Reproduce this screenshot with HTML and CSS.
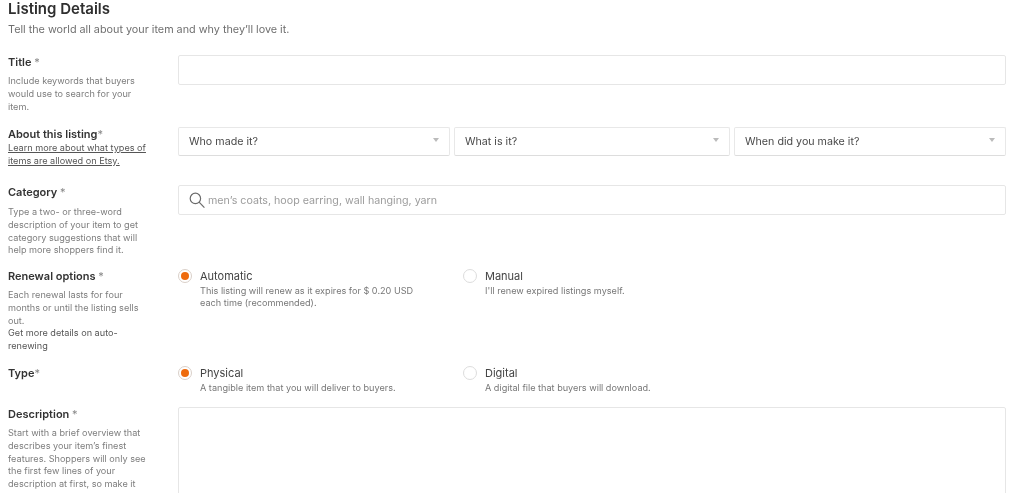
FILE: index.html
```html
<!DOCTYPE html>
<html lang="en">
<head>
<meta charset="utf-8">
<title>Listing Details</title>
<link rel="stylesheet" href="styles.css">
</head>
<body>
<main class="page">
  <header class="head">
    <h1>Listing Details</h1>
    <p>Tell the world all about your item and why they’ll love it.</p>
  </header>

  <section class="row row-title">
    <div class="label">
      <h2>Title <span class="star">*</span></h2>
      <p>Include keywords that buyers would use to search for your item.</p>
    </div>
    <div class="box box-30"></div>
  </section>

  <section class="row row-about">
    <div class="label">
      <h2>About this listing<span class="star">*</span></h2>
      <a href="#">Learn more about what types of items are allowed on Etsy.</a>
    </div>
    <div class="selects">
      <div class="select">Who made it?<i class="caret"></i></div>
      <div class="select">What is it?<i class="caret"></i></div>
      <div class="select">When did you make it?<i class="caret"></i></div>
    </div>
  </section>

  <section class="row row-category">
    <div class="label">
      <h2>Category <span class="star">*</span></h2>
      <p>Type a two- or three-word description of your item to get category suggestions that will help more shoppers find it.</p>
    </div>
    <div class="box box-30 search">
      <svg class="lens" width="16" height="16" viewBox="0 0 16 16" fill="none" stroke="#6b6b6b" stroke-width="1.2"><circle cx="6.4" cy="6.4" r="5.2"/><path d="M10.1 10.1 15.4 15.6"/></svg>
      <span>men’s coats, hoop earring, wall hanging, yarn</span>
    </div>
  </section>

  <section class="row row-renewal">
    <div class="label">
      <h2>Renewal options <span class="star">*</span></h2>
      <p>Each renewal lasts for four months or until the listing sells out.</p>
      <p class="dark">Get more details on auto-renewing</p>
    </div>
    <div class="radios">
      <div class="radio">
        <i class="dot on"></i>
        <div><b>Automatic</b><small>This listing will renew as it expires for $ 0.20 USD each time (recommended).</small></div>
      </div>
      <div class="radio">
        <i class="dot"></i>
        <div><b>Manual</b><small>I'll renew expired listings myself.</small></div>
      </div>
    </div>
  </section>

  <section class="row row-type">
    <div class="label">
      <h2>Type<span class="star">*</span></h2>
    </div>
    <div class="radios">
      <div class="radio">
        <i class="dot on"></i>
        <div><b>Physical</b><small>A tangible item that you will deliver to buyers.</small></div>
      </div>
      <div class="radio">
        <i class="dot"></i>
        <div><b>Digital</b><small>A digital file that buyers will download.</small></div>
      </div>
    </div>
  </section>

  <section class="row row-desc">
    <div class="label">
      <h2>Description <span class="star">*</span></h2>
      <p>Start with a brief overview that describes your item’s finest features. Shoppers will only see the first few lines of your description at first, so make it</p>
    </div>
    <div class="box box-desc"></div>
  </section>
</main>
</body>
</html>
```

FILE: styles.css
```css
html, body {
  margin: 0;
  height: 493px;
  overflow: hidden;
  background: #fff;
}
body {
  font-family: "Inter", "Liberation Sans", sans-serif;
  color: #333;
}
.page {
  box-sizing: border-box;
  height: 493px;
  overflow: hidden;
  padding: 0 18px 0 8px;
  filter: blur(0.4px);
}
.head h1 {
  margin: 0;
  font-size: 15px;
  line-height: 18px;
  font-weight: 600;
  color: #2f2f2f;
}
.head p {
  margin: 4px 0 0;
  font-size: 10.8px;
  line-height: 16px;
  color: #6f6f6f;
}
.row {
  display: grid;
  grid-template-columns: 170px 828px;
}
.row-title { margin-top: 17px; height: 72px; }
.row-about { height: 58px; }
.row-category { height: 84px; }
.row-renewal { height: 97px; }
.row-type { height: 41px; }
.label h2 {
  margin: 0;
  font-size: 11px;
  line-height: 14px;
  font-weight: 600;
  color: #333;
}
.star { font-weight: 400; color: #888; }
.label p, .label a {
  display: block;
  margin: 0;
  width: 142px;
  font-size: 9.15px;
  line-height: 12.8px;
  color: #7d7d7d;
}
.label h2 + p { margin-top: 6px; }
.row-category .label h2 + p { margin-top: 7px; }
.label h2 + a { margin-top: 1px; }
.label a { color: #555; text-decoration: underline; }
.label p.dark { color: #555; }
.box {
  box-sizing: border-box;
  border: 1px solid #e6e6e6;
  border-radius: 2px;
  background: #fff;
}
.box-30 { height: 30px; }
.box-desc { height: 120px; }
.selects {
  display: grid;
  grid-template-columns: 272px 276px 272px;
  column-gap: 4px;
  height: 29px;
}
.select {
  box-sizing: border-box;
  position: relative;
  height: 29px;
  padding: 0 10px;
  border: 1px solid #e8e8e8;
  border-bottom-color: #ddd;
  border-radius: 2px;
  font-size: 10.7px;
  line-height: 27px;
  color: #4a4a4a;
}
.caret {
  position: absolute;
  right: 10px;
  top: 10px;
  width: 0;
  height: 0;
  border-left: 3.5px solid transparent;
  border-right: 3.5px solid transparent;
  border-top: 4px solid #bbb;
}
.search {
  display: flex;
  align-items: center;
  gap: 3px;
  padding-left: 10px;
  font-size: 10.7px;
  color: #9c9c9c;
}
.lens { flex: none; }
.radios {
  display: grid;
  grid-template-columns: 285px 1fr;
}
.radio {
  display: flex;
  gap: 8px;
}
.dot {
  flex: none;
  box-sizing: border-box;
  width: 14px;
  height: 14px;
  border: 1px solid #dcdcdc;
  border-radius: 50%;
  background: #fff;
}
.dot.on {
  position: relative;
  border-color: #d9cfc8;
}
.dot.on::after {
  content: "";
  position: absolute;
  left: 2px;
  top: 2px;
  width: 8px;
  height: 8px;
  border-radius: 50%;
  background: #ee6a0c;
}
.radio b {
  display: block;
  font-weight: 400;
  font-size: 11px;
  line-height: 14px;
  color: #444;
}
.radio small {
  display: block;
  width: 225px;
  margin-top: 1.5px;
  font-size: 9.15px;
  line-height: 12.8px;
  color: #777;
}
```
